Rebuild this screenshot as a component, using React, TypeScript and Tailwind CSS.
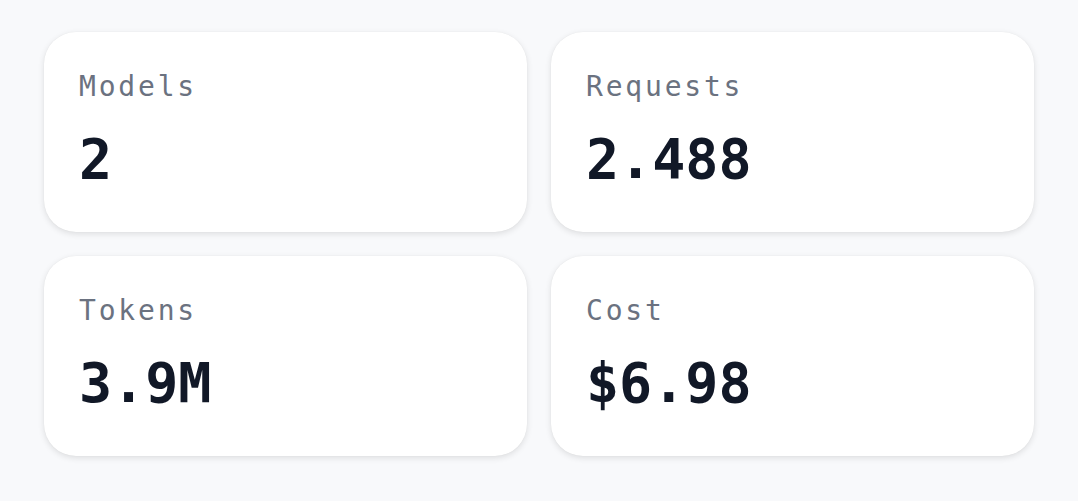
import React from "react";

const stats = [
  { label: "Models", value: "2" },
  { label: "Requests", value: "2.488" },
  { label: "Tokens", value: "3.9M" },
  { label: "Cost", value: "$6.98" },
];

export default function App() {
  return (
    <div className="min-h-[501px] w-full bg-[#f8f9fb] px-[44px] pt-8 pb-[45px]" style={{ fontFamily: '"DejaVu Sans Mono", "Liberation Mono", monospace' }}>
      <div className="grid grid-cols-2 gap-[24px]">
        {stats.map((s) => (
          <div
            key={s.label}
            className="h-[200px] rounded-[32px] bg-white px-[35px] pt-[35px] shadow-[0_2px_6px_rgba(0,0,0,0.11),0_0_1px_rgba(0,0,0,0.08)]"
          >
            <div className="text-[28px] leading-[40px] tracking-[0.1em] text-[#6b7280]">{s.label}</div>
            <div className="mt-[22px] text-[55px] font-bold leading-[60px] text-[#111827]">{s.value}</div>
          </div>
        ))}
      </div>
    </div>
  );
}
